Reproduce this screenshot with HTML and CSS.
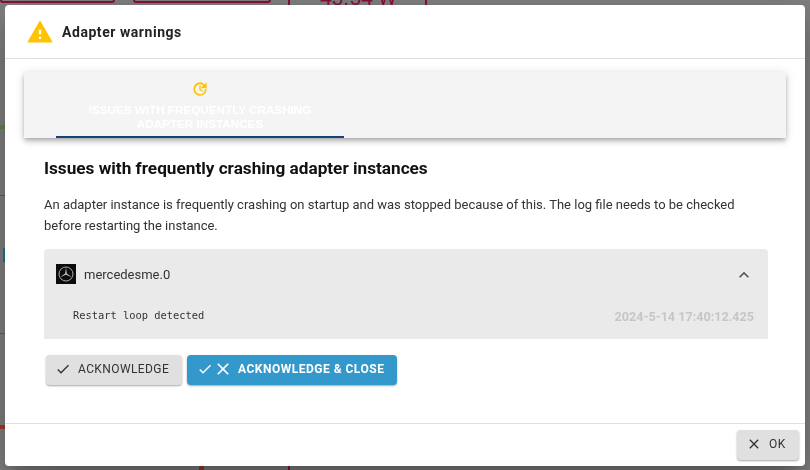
FILE: index.html
```html
<!DOCTYPE html>
<html lang="en">
<head>
<meta charset="utf-8">
<title>Adapter warnings</title>
<link rel="stylesheet" href="styles.css">
</head>
<body>
<div class="backdrop">
  <i class="bg-box bg-box-a"></i>
  <i class="bg-box bg-box-b"></i>
  <i class="bg-line bg-line-a"></i>
  <i class="bg-line bg-line-b"></i>
  <span class="bg-value">43.54 W</span>
  <i class="bg-tick bg-tick-a"></i>
  <i class="bg-tick bg-tick-b"></i>
  <i class="bg-tick bg-tick-c"></i>
  <i class="bg-green"></i>
  <i class="bg-teal bg-teal-a"></i>
  <i class="bg-teal bg-teal-b"></i>
  <i class="bg-teal-stem"></i>
</div>
<main class="dialog">
  <header class="dialog-header">
    <svg class="warn-icon" viewBox="0 0 24 24"><path fill="#ffc400" d="M1 21h22L12 2 1 21zm12-3h-2v-2h2v2zm0-4h-2v-4h2v4z"/></svg>
    <h1 class="dialog-title">Adapter warnings</h1>
  </header>
  <section class="dialog-content">
    <div class="tabs">
      <div class="tab">
        <svg class="tab-icon" viewBox="0 0 24 24"><path fill="#ffc400" d="M11 7v6.5l4.6 2.7 1-1.7-3.6-2.1V7h-2zm11 4V2l-3.1 3.1A10 10 0 0 0 12 2a10 10 0 1 0 10 10h-2.6A7.4 7.4 0 1 1 17 6.9L13 11h9z"/></svg>
        <span class="tab-label">Issues with frequently crashing adapter instances</span>
      </div>
    </div>
    <div class="panel">
      <h2 class="panel-title">Issues with frequently crashing adapter instances</h2>
      <p class="panel-text">An adapter instance is frequently crashing on startup and was stopped because of this. The log file needs to be checked before restarting the instance.</p>
      <div class="accordion">
        <div class="accordion-head">
          <span class="logo">
            <svg viewBox="0 0 20 20"><circle cx="10" cy="10" r="7" fill="none" stroke="#aaa" stroke-width="1"/><path fill="#bbb" d="M10 3.2l.9 6.3 5 3.7-5.9-2.4-5.9 2.4 5-3.7z"/></svg>
          </span>
          <span class="instance">mercedesme.0</span>
          <svg class="chevron" viewBox="0 0 24 24"><path fill="#555" d="M12 8l-6 6 1.41 1.41L12 10.83l4.59 4.58L18 14z"/></svg>
        </div>
        <div class="accordion-body">
          <span class="log-msg">Restart loop detected</span>
          <span class="log-time">2024-5-14 17:40:12.425</span>
        </div>
      </div>
      <div class="actions">
        <button class="btn btn-grey" type="button">
          <svg class="btn-icon" viewBox="0 0 24 24"><path fill="currentColor" d="M9 16.17 4.83 12l-1.42 1.41L9 19 21 7l-1.41-1.41z"/></svg>
          Acknowledge
        </button>
        <button class="btn btn-blue" type="button">
          <svg class="btn-icon" viewBox="0 0 24 24"><path fill="currentColor" d="M9 16.17 4.83 12l-1.42 1.41L9 19 21 7l-1.41-1.41z"/></svg>
          <svg class="btn-icon-large" viewBox="0 0 24 24"><path fill="currentColor" d="M19 6.41 17.59 5 12 10.59 6.41 5 5 6.41 10.59 12 5 17.59 6.41 19 12 13.41 17.59 19 19 17.59 13.41 12z"/></svg>
          <span class="btn-blue-label">Acknowledge &amp; close</span>
        </button>
      </div>
    </div>
  </section>
  <footer class="dialog-footer">
    <button class="btn btn-grey btn-ok" type="button">
      <svg class="btn-icon" viewBox="0 0 24 24"><path fill="currentColor" d="M19 6.41 17.59 5 12 10.59 6.41 5 5 6.41 10.59 12 5 17.59 6.41 19 12 13.41 17.59 19 19 17.59 13.41 12z"/></svg>
      OK
    </button>
  </footer>
</main>
</body>
</html>
```
FILE: styles.css
```css
* { box-sizing: border-box; }
html, body { height: 100%; }
body {
  margin: 0;
  padding: 5px;
  background: #808080;
  font-family: Roboto, "Liberation Sans", sans-serif;
  overflow: hidden;
}
.backdrop { position: fixed; inset: 0; }
.bg-box { position: absolute; top: -10px; height: 13px; border: 2px solid #8a1034; border-radius: 3px; }
.bg-box-a { left: 0; width: 115px; }
.bg-box-b { left: 133px; width: 138px; }
.bg-line { position: absolute; top: 0; width: 2px; height: 5px; background: #8a1034; }
.bg-line-a { left: 288px; }
.bg-line-b { left: 425px; }
.bg-value { position: absolute; left: 320px; top: -14px; font-size: 21px; color: #8a1034; }
.bg-tick { position: absolute; width: 5px; height: 4px; background: #a5372a; }
.bg-tick-a { left: 0; top: 425px; }
.bg-tick-b { left: 199px; top: 466px; }
.bg-tick-c { left: 288px; top: 466px; width: 2px; background: #8a1034; }
.bg-green { position: absolute; left: 0; top: 125px; width: 5px; height: 4px; background: #5f8a3a; }
.bg-teal { position: absolute; left: 0; width: 5px; height: 1px; background: #1f7a8c; }
.bg-teal-a { top: 195px; }
.bg-teal-b { top: 333px; }
.bg-teal-stem { position: absolute; left: 3px; top: 248px; width: 2px; height: 14px; background: #1f7a8c; }

.dialog {
  position: relative;
  width: 800px;
  height: 461px;
  background: #fff;
  border-radius: 4px;
  box-shadow: 0 11px 15px -7px rgba(0,0,0,.2), 0 24px 38px 3px rgba(0,0,0,.14), 0 9px 46px 8px rgba(0,0,0,.12);
  display: flex;
  flex-direction: column;
}
.dialog-header {
  height: 54px;
  flex: none;
  display: flex;
  align-items: center;
  gap: 8px;
  padding: 0 21px;
  border-bottom: 1px solid #e0e0e0;
}
.warn-icon { width: 28px; height: 28px; flex: none; }
.dialog-title {
  margin: 0;
  font-size: 14px;
  font-weight: 700;
  letter-spacing: 0.55px;
  color: #222;
}
.dialog-content { flex: 1; padding: 13px 19px 0; min-height: 0; }
.tabs {
  height: 66px;
  background: #f4f4f4;
  box-shadow: 0 2px 4px -1px rgba(0,0,0,.2), 0 4px 5px rgba(0,0,0,.14), 0 1px 10px rgba(0,0,0,.12);
  padding-left: 32px;
}
.tab {
  width: 288px;
  height: 66px;
  border-bottom: 2px solid #164477;
  display: flex;
  flex-direction: column;
  align-items: center;
  padding-top: 9px;
}
.tab-icon { width: 16px; height: 16px; flex: none; }
.tab-label {
  margin-top: 6px;
  width: 240px;
  text-align: center;
  font-family: "Liberation Sans", Roboto, sans-serif;
  font-size: 11.7px;
  line-height: 14px;
  font-weight: 700;
  text-transform: uppercase;
  color: #fff;
}
.panel { padding: 20px 20px 0; }
.panel-title {
  margin: 0;
  font-size: 17.2px;
  line-height: 20px;
  font-weight: 700;
  color: #111;
}
.panel-text {
  margin: 16px 0 0;
  font-size: 13px;
  line-height: 21px;
  color: #333;
}
.accordion {
  margin-top: 13px;
  background: #eaeaea;
  border-radius: 4px 4px 0 0;
  height: 90px;
  width: 724px;
}
.accordion-head {
  height: 50px;
  display: flex;
  align-items: center;
  padding: 0 14px 0 12px;
}
.logo {
  width: 20px;
  height: 20px;
  background: #0c0c0c;
  flex: none;
}
.logo svg { display: block; width: 20px; height: 20px; }
.instance { margin-left: 8px; font-size: 13px; color: #333; flex: 1; }
.chevron { width: 20px; height: 20px; flex: none; margin-top: 2px; }
.accordion-body {
  display: flex;
  justify-content: space-between;
  align-items: center;
  padding: 0 14px 0 29px;
  height: 32px;
}
.log-msg { font-family: "DejaVu Sans Mono", monospace; font-size: 10.4px; color: #333; }
.log-time { font-size: 12.6px; font-weight: 700; color: #c6c6c6; padding-top: 2px; }
.actions { display: flex; gap: 5px; margin: 16px 0 0 2px; }
.btn {
  display: inline-flex;
  align-items: center;
  height: 30px;
  border: 0;
  border-radius: 4px;
  font-family: inherit;
  font-size: 12px;
  letter-spacing: 0.4px;
  text-transform: uppercase;
  box-shadow: 0 1px 2px rgba(0,0,0,.35);
  padding: 0 9px 2px;
}
.btn-grey { background: #e0e0e0; color: #333; width: 136px; gap: 7px; }
.btn-blue { background: #3399cc; color: #fff; width: 210px; font-weight: 700; letter-spacing: 0.5px; padding-left: 10px; }
.btn-blue-label { margin-left: 5px; }
.btn-icon { width: 16px; height: 16px; flex: none; }
.btn-icon-large { width: 20px; height: 20px; flex: none; }
.dialog-footer {
  flex: none;
  height: 43px;
  border-top: 1px solid #e0e0e0;
  display: flex;
  justify-content: flex-end;
  align-items: flex-start;
  padding: 6px 6px 0;
}
.btn-ok { width: 62px; }
```
